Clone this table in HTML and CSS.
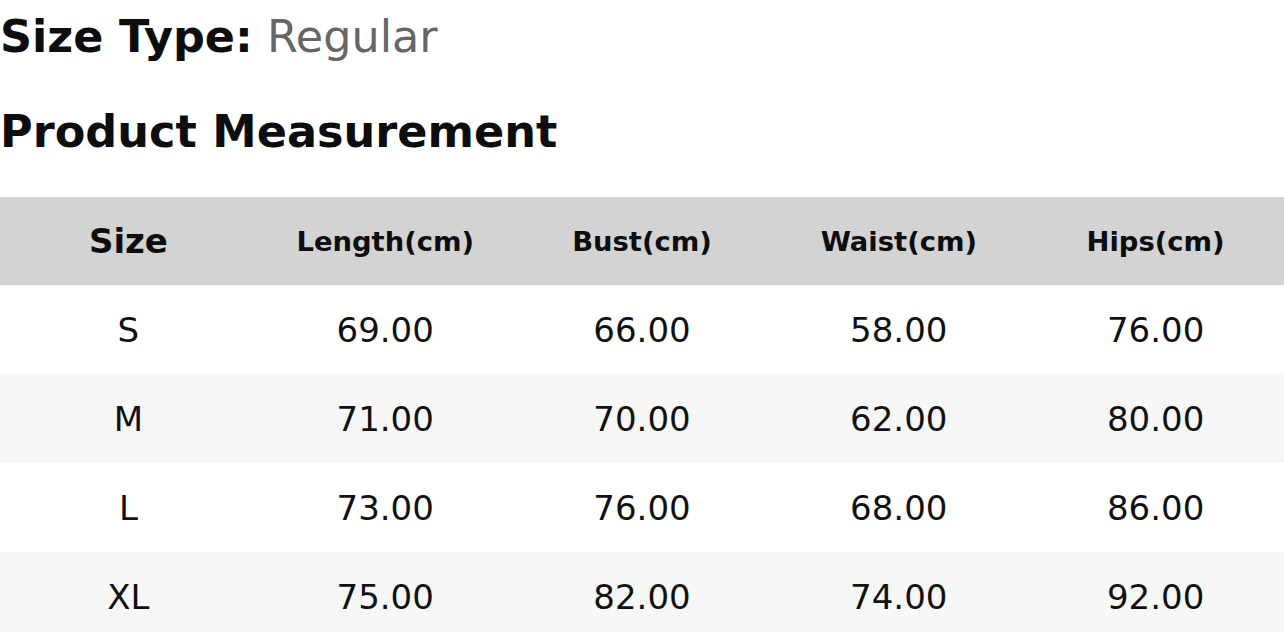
FILE: index.html
```html
<!DOCTYPE html>
<html>
<head>
<meta charset="utf-8">
<link rel="stylesheet" href="styles.css">
</head>
<body>
<div class="page">
  <div class="size-type"><span class="label">Size Type:</span> <span class="value">Regular</span></div>
  <h2 class="title">Product Measurement</h2>
  <table class="measure">
    <thead>
      <tr>
        <th class="size-head">Size</th>
        <th>Length(cm)</th>
        <th>Bust(cm)</th>
        <th>Waist(cm)</th>
        <th>Hips(cm)</th>
      </tr>
    </thead>
    <tbody>
      <tr><td>S</td><td>69.00</td><td>66.00</td><td>58.00</td><td>76.00</td></tr>
      <tr><td>M</td><td>71.00</td><td>70.00</td><td>62.00</td><td>80.00</td></tr>
      <tr><td>L</td><td>73.00</td><td>76.00</td><td>68.00</td><td>86.00</td></tr>
      <tr><td>XL</td><td>75.00</td><td>82.00</td><td>74.00</td><td>92.00</td></tr>
    </tbody>
  </table>
</div>
</body>
</html>
```

FILE: styles.css
```css
html, body {
  margin: 0;
  padding: 0;
  background: #ffffff;
}

body {
  font-family: "DejaVu Sans", "Verdana", sans-serif;
  color: #111111;
}

.page {
  padding-top: 11px;
}

.size-type {
  font-size: 44.5px;
  line-height: 52px;
  white-space: nowrap;
}

.size-type .label {
  font-weight: bold;
  color: #0d0d0d;
}

.size-type .value {
  color: #666666;
}

.title {
  margin: 43px 0 0 0;
  font-size: 44.6px;
  line-height: 52px;
  font-weight: bold;
  color: #0d0d0d;
}

.measure {
  margin-top: 39px;
  width: 100%;
  border-collapse: collapse;
  table-layout: fixed;
}

.measure th,
.measure td {
  padding: 0;
  text-align: center;
  vertical-align: middle;
}

.measure thead tr {
  background: #d3d3d3;
}

.measure th {
  height: 88px;
  font-size: 27.4px;
  font-weight: bold;
  color: #0d0d0d;
}

.measure th.size-head {
  font-size: 34px;
}

.measure td {
  height: 89px;
  font-size: 34px;
  color: #111111;
}

.measure tbody tr:nth-child(even) {
  background: #f7f7f7;
}
```
